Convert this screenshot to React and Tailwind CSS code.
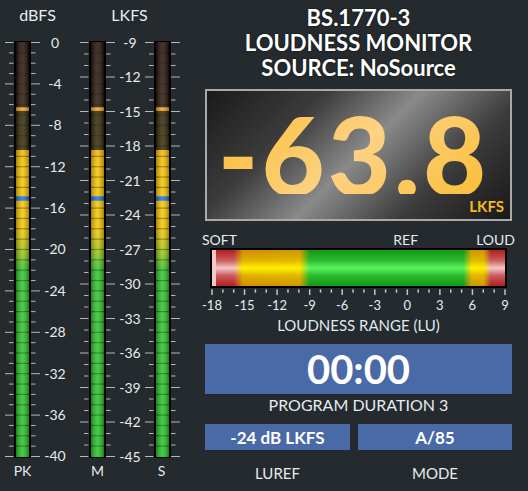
import React from "react";

function Meter({ id, step, majorEvery, count }) {
  const ticks = [];
  for (let i = 0; i <= count; i++) {
    const y = 2.5 + i * step;
    const major = i % majorEvery === 0;
    ticks.push(
      <rect key={"l" + i} x={major ? 0 : 4} y={y - 0.5} width={major ? 8.5 : 4.5} height={1} fill="#b4b9ba" />
    );
    ticks.push(
      <rect key={"r" + i} x={26} y={y - 0.5} width={major ? 9 : 4.5} height={1} fill="#b4b9ba" />
    );
  }
  const segs = [];
  for (let i = 1; i < 40; i++) {
    const y = 2.5 + i * 10.35;
    segs.push(<rect key={"s" + i} x={11} y={y - 0.6} width={13} height={1.2} fill="rgba(0,0,0,0.4)" />);
  }
  return (
    <svg width="35" height="419" viewBox="0 0 35 419" className="block shrink-0">
      <defs>
        <linearGradient id={id + "v"} x1="0" y1="0" x2="0" y2="419" gradientUnits="userSpaceOnUse">
          <stop offset="0" stopColor="#1e0b08" />
          <stop offset="0.158" stopColor="#261608" />
          <stop offset="0.167" stopColor="#2c2406" />
          <stop offset="0.262" stopColor="#302806" />
          <stop offset="0.2625" stopColor="#f2b400" />
          <stop offset="0.3" stopColor="#f5c200" />
          <stop offset="0.453" stopColor="#f3c600" />
          <stop offset="0.5" stopColor="#a9c412" />
          <stop offset="0.549" stopColor="#2fc12a" />
          <stop offset="1" stopColor="#22c024" />
        </linearGradient>
        <linearGradient id={id + "h"} x1="0" y1="0" x2="1" y2="0">
          <stop offset="0" stopColor="#000" stopOpacity="0.32" />
          <stop offset="0.5" stopColor="#fff" stopOpacity="0.16" />
          <stop offset="1" stopColor="#000" stopOpacity="0.32" />
        </linearGradient>
      </defs>
      {ticks}
      <rect x="9" y="1" width="17" height="417" fill="#000" />
      <rect x="11" y="2" width="13" height="415" fill={`url(#${id}v)`} />
      {segs}
      <rect x="11" y="67.3" width="13" height="3.6" fill="#f5a41e" />
      <rect x="11" y="156.3" width="13" height="4.4" fill="#1b6de6" />
      <rect x="11" y="2" width="13" height="415" fill={`url(#${id}h)`} />
    </svg>
  );
}

function ScaleLabels({ labels }) {
  return (
    <div className="flex flex-col justify-between h-[428px] mt-[-4.5px] w-[30px] shrink-0">
      {labels.map((l) => (
        <div key={l} className="h-[14px] leading-[14px] text-[14px] text-center">
          {l}
        </div>
      ))}
    </div>
  );
}

function RangeBar() {
  return (
    <svg width="297" height="40" viewBox="0 0 297 40" className="block">
      <defs>
        <linearGradient id="redge" x1="0" y1="0" x2="1" y2="0">
          <stop offset="0" stopColor="#b32024" />
          <stop offset="0.075" stopColor="#b32024" />
          <stop offset="0.105" stopColor="#d18e00" />
          <stop offset="0.3" stopColor="#d19800" />
          <stop offset="0.333" stopColor="#129b16" />
          <stop offset="0.858" stopColor="#129b16" />
          <stop offset="0.886" stopColor="#d19800" />
          <stop offset="0.927" stopColor="#d19800" />
          <stop offset="0.952" stopColor="#b32024" />
          <stop offset="1" stopColor="#b32024" />
        </linearGradient>
        <linearGradient id="rcenter" x1="0" y1="0" x2="1" y2="0">
          <stop offset="0" stopColor="#f4c8c8" />
          <stop offset="0.075" stopColor="#f4c8c8" />
          <stop offset="0.105" stopColor="#fff000" />
          <stop offset="0.3" stopColor="#fff000" />
          <stop offset="0.333" stopColor="#5cf25c" />
          <stop offset="0.858" stopColor="#5cf25c" />
          <stop offset="0.886" stopColor="#fff000" />
          <stop offset="0.927" stopColor="#fff000" />
          <stop offset="0.952" stopColor="#f4c8c8" />
          <stop offset="1" stopColor="#f4c8c8" />
        </linearGradient>
        <linearGradient id="vmask" x1="0" y1="0" x2="0" y2="1">
          <stop offset="0" stopColor="#000" />
          <stop offset="0.28" stopColor="#555" />
          <stop offset="0.5" stopColor="#fff" />
          <stop offset="0.72" stopColor="#555" />
          <stop offset="1" stopColor="#000" />
        </linearGradient>
        <mask id="rmask">
          <rect x="2" y="2" width="293" height="36" fill="url(#vmask)" />
        </mask>
      </defs>
      <rect x="0" y="0" width="297" height="40" fill="#000" />
      <rect x="2" y="2" width="293" height="36" fill="url(#redge)" />
      <rect x="2" y="2" width="293" height="36" fill="url(#rcenter)" mask="url(#rmask)" />
      <rect x="2" y="2" width="4" height="36" fill="#f2c9c9" />
    </svg>
  );
}

function RangeTicks() {
  const t = [];
  for (let k = 0; k <= 27; k++) {
    const x = 2 + (k * 293) / 27;
    const major = k % 3 === 0;
    t.push(
      <rect key={k} x={x - 0.75} y={1.3} width={1.5} height={major ? 5.7 : 3.4} fill="#c2c6c8" />
    );
  }
  return (
    <svg width="297" height="8" viewBox="0 0 297 8" className="block">
      {t}
    </svg>
  );
}

export default function App() {
  const dbfs = ["0", "-4", "-8", "-12", "-16", "-20", "-24", "-28", "-32", "-36", "-40"];
  const lkfs = ["-9", "-12", "-15", "-18", "-21", "-24", "-27", "-30", "-33", "-36", "-39", "-42", "-45"];
  const range = ["-18", "-15", "-12", "-9", "-6", "-3", "0", "3", "6", "9"];
  return (
    <div className="w-[528px] h-[491px] bg-[#242a2d] flex text-[#e6ecef] font-[Lato,'Noto_Sans',sans-serif] overflow-hidden">
      {/* Left meters */}
      <div className="flex w-[205px] pl-[5px] shrink-0">
        <div className="flex flex-col w-[65px]">
          <div className="h-[40px] pt-[7px] text-center text-[16px] leading-[16px]">dBFS</div>
          <div className="flex h-[419px]">
            <Meter id="pk" step={10.35} majorEvery={4} count={40} />
            <ScaleLabels labels={dbfs} />
          </div>
          <div className="flex mt-[5px]">
            <div className="w-[35px] text-center text-[14px] leading-[14px]">PK</div>
          </div>
        </div>
        <div className="flex flex-col w-[99px] ml-[10px]">
          <div className="h-[40px] pt-[7px] text-center text-[16px] leading-[16px]">LKFS</div>
          <div className="flex h-[419px]">
            <Meter id="m" step={11.5} majorEvery={3} count={36} />
            <ScaleLabels labels={lkfs} />
            <Meter id="s" step={11.5} majorEvery={3} count={36} />
          </div>
          <div className="flex mt-[5px]">
            <div className="w-[35px] text-center text-[14px] leading-[14px]">M</div>
            <div className="w-[29px]" />
            <div className="w-[35px] text-center text-[14px] leading-[14px]">S</div>
          </div>
        </div>
      </div>

      {/* Right panel */}
      <div className="w-[307px] flex flex-col shrink-0">
        <div className="pt-[5px] text-center font-bold text-[22px] leading-[25px] text-white [text-shadow:0_0_2px_rgba(0,0,0,0.7)]">
          <div>BS.1770-3</div>
          <div>LOUDNESS MONITOR</div>
          <div>SOURCE: NoSource</div>
        </div>

        <div className="relative mt-[9px] h-[132px] border-2 border-[#a9a9a9] bg-[linear-gradient(135deg,#1a1a1a_0%,#3c3c3c_28%,#8a8a8a_50%,#3c3c3c_74%,#181818_100%)] flex items-center justify-center pr-[10px]">
          <span className="text-[109px] leading-[80px] font-black tracking-[3px] bg-[linear-gradient(135deg,#fbbb30_0%,#fdd284_50%,#fbbd36_100%)] bg-clip-text text-transparent mb-[2px]">
            -63.8
          </span>
          <span className="absolute right-[6px] bottom-[5px] text-[15px] leading-[15px] font-bold text-[#f6b81c]">
            LKFS
          </span>
        </div>

        <div className="mt-[12px] h-[14px] flex text-[14px] leading-[14px]">
          <span className="ml-[-3px]">SOFT</span>
          <div className="flex-1" />
          <span>REF</span>
          <div className="w-[58px]" />
          <span className="mr-[-3px]">LOUD</span>
        </div>

        <div className="mt-[1px] ml-[5px]">
          <RangeBar />
          <RangeTicks />
        </div>

        <div className="mt-[3px] mx-[-8px] flex justify-between">
          {range.map((r) => (
            <div key={r} className="w-[30px] text-center text-[13px] leading-[13px]">
              {r}
            </div>
          ))}
        </div>

        <div className="mt-[6px] text-center text-[15px] leading-[15px] text-[#dfe9ef]">LOUDNESS RANGE (LU)</div>

        <div className="mt-[11px] h-[50px] bg-[#4a69a7] flex items-center justify-center text-white text-[40px] leading-none font-bold">
          00:00
        </div>

        <div className="mt-[3px] text-center text-[16px] leading-[16px]">PROGRAM DURATION 3</div>

        <div className="mt-[11px] flex gap-[8px] h-[26px]">
          <div className="w-[145px] bg-[#4a69a7] flex items-center justify-center text-white font-bold text-[17px] leading-none">
            -24 dB LKFS
          </div>
          <div className="flex-1 bg-[#4a69a7] flex items-center justify-center text-white font-bold text-[17px] leading-none">
            A/85
          </div>
        </div>

        <div className="mt-[16px] flex gap-[8px] text-[15px] leading-[15px]">
          <div className="w-[145px] text-center">LUREF</div>
          <div className="flex-1 text-center">MODE</div>
        </div>
      </div>
    </div>
  );
}
